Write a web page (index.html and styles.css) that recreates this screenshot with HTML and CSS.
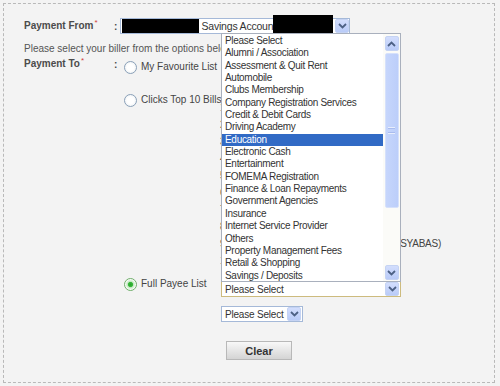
FILE: index.html
```html
<!DOCTYPE html>
<html lang="en">
<head>
  <meta charset="UTF-8">
  <title>Bill Payment</title>
  <link rel="stylesheet" href="styles.css">
</head>
<body>

  <div class="panel">

    <!-- from account -->
    <div class="form-row from-row">
      <span class="label">Payment From<sup>*</sup></span>
      <span class="colon">:</span>
      <div class="select account">
        <span class="redact r1"></span>
        <span class="select-text">Savings Account</span>
        <span class="redact r2"></span>
        <span class="drop-btn"><svg width="9" height="6" viewBox="0 0 9 6"><polyline points="1,1 4.5,4.5 8,1" /></svg></span>
      </div>
    </div>

    <p class="hint">Please select your biller from the options below</p>

    <!-- biller -->
    <div class="form-row to-row">
      <span class="label">Payment To<sup>*</sup></span>
      <span class="colon">:</span>
      <div class="options">

        <div class="option fav">
          <label class="choice"><span class="radio"></span>My Favourite List</label>
        </div>

        <div class="option top">
          <label class="choice"><span class="radio"></span>Clicks Top 10 Bills</label>
          <ol class="top-list">
            <li>1. Tenaga Nasional Berhad</li>
            <li>2. Telekom Malaysia</li>
            <li>3. Astro</li>
            <li>4. Maxis</li>
            <li>5. Celcom</li>
            <li>6. DiGi</li>
            <li>7. Indah Water Konsortium</li>
            <li>8. Dewan Bandaraya</li>
            <li>9. Syarikat Bekalan Air Selangor Sdn Bhd (SYABAS)</li>
            <li>10. Prudential</li>
          </ol>
        </div>

        <div class="option full">
          <label class="choice"><span class="radio checked"></span>Full Payee List</label>
          <div class="full-fields">
            <div class="select category focused">
              <span class="select-text">Please Select</span>
              <span class="drop-btn"><svg width="9" height="6" viewBox="0 0 9 6"><polyline points="1,1 4.5,4.5 8,1" /></svg></span>
            </div>
            <div class="select payee">
              <span class="select-text">Please Select</span>
              <span class="drop-btn"><svg width="9" height="6" viewBox="0 0 9 6"><polyline points="1,1 4.5,4.5 8,1" /></svg></span>
            </div>
            <button class="clear-btn">Clear</button>
          </div>
        </div>

      </div>
    </div>

    <!-- open dropdown -->
    <div class="dropdown">
      <ul class="dropdown-items">
        <li>Please Select</li>
        <li>Alumni / Association</li>
        <li>Assessment &amp; Quit Rent</li>
        <li>Automobile</li>
        <li>Clubs Membership</li>
        <li>Company Registration Services</li>
        <li>Credit &amp; Debit Cards</li>
        <li>Driving Academy</li>
        <li class="selected">Education</li>
        <li>Electronic Cash</li>
        <li>Entertainment</li>
        <li>FOMEMA Registration</li>
        <li>Finance &amp; Loan Repayments</li>
        <li>Government Agencies</li>
        <li>Insurance</li>
        <li>Internet Service Provider</li>
        <li>Others</li>
        <li>Property Management Fees</li>
        <li>Retail &amp; Shopping</li>
        <li>Savings / Deposits</li>
      </ul>
      <div class="scrollbar">
        <span class="scroll-btn"><svg width="9" height="6" viewBox="0 0 9 6"><polyline points="1,5 4.5,1.5 8,5" /></svg></span>
        <span class="thumb"><span class="grip"></span></span>
        <span class="track"></span>
        <span class="scroll-btn"><svg width="9" height="6" viewBox="0 0 9 6"><polyline points="1,1 4.5,4.5 8,1" /></svg></span>
      </div>
    </div>

  </div>

</body>
</html>
```

FILE: styles.css
```css
body {
  margin: 0;
  padding: 3px;
  background: #f3f3f3;
  font-family: "Liberation Sans", Arial, sans-serif;
  font-size: 10px;
  color: #4a4a4a;
}

/* 枠 */
.panel {
  position: relative;
  box-sizing: border-box;
  width: 492px;
  height: 380px;
  border: 1px dashed #b9b9b9;
  padding: 14px 0 0 20px;
}

.form-row {
  display: flex;
  align-items: flex-start;
}

.label {
  width: 90px;
  font-weight: bold;
  color: #4b4b4b;
  line-height: 16px;
}

.label sup {
  color: #d23c3c;
  font-size: 8px;
  font-weight: normal;
  vertical-align: 4px;
  line-height: 0;
  margin-left: 1px;
}

.colon {
  width: 6px;
  font-weight: bold;
  line-height: 18px;
}

/* セレクト */
.select {
  display: flex;
  align-items: center;
  box-sizing: border-box;
  height: 16px;
  background: #fff;
  border: 1px solid #a5b9d8;
  color: #333;
  letter-spacing: -0.2px;
}

.select-text {
  flex: 1;
  padding-left: 3px;
  white-space: nowrap;
}

.drop-btn, .scroll-btn {
  display: flex;
  align-items: center;
  justify-content: center;
  box-sizing: border-box;
  width: 14px;
  height: 14px;
  background: linear-gradient(#d3defd, #b9cbf8);
  border: 1px solid #c5d3f3;
  border-radius: 2px;
}

.drop-btn svg polyline, .scroll-btn svg polyline {
  fill: none;
  stroke: #4d6185;
  stroke-width: 1.8;
}

.account {
  position: relative;
  width: 230px;
}

.account .select-text {
  flex: none;
  width: 72px;
  padding-left: 2px;
  overflow: hidden;
  font-size: 10.5px;
}

.redact {
  background: #000;
}

.r1 {
  width: 78px;
  height: 14px;
  margin-left: 1px;
}

.r2 {
  width: 60px;
  height: 22px;
  margin-right: 2px;
  position: relative;
  z-index: 1;
}

.hint {
  margin: 6px 0 1px;
  line-height: 13px;
  color: #555;
}

/* 選択肢 */
.options {
  padding-top: 3px;
}

.option {
  display: flex;
  align-items: flex-start;
}

.choice {
  display: flex;
  align-items: center;
  gap: 4px;
  width: 101px;
  padding-left: 4px;
  box-sizing: border-box;
  line-height: 13px;
  color: #444;
  white-space: nowrap;
}

.radio {
  flex: none;
  box-sizing: border-box;
  width: 13px;
  height: 13px;
  margin-top: 2px;
  border: 1px solid #8aa0b8;
  border-radius: 50%;
  background: radial-gradient(#ffffff 40%, #e8ecef);
}

.radio.checked {
  border-color: #6fae6a;
  background: radial-gradient(#27a32a 0, #38b83a 28%, #bfe6bd 38%, #fff 70%);
}

.fav {
  height: 33px;
}

.top {
  height: 184px;
}

.top-list {
  list-style: none;
  margin: 7px 0 0 -1px;
  padding: 0;
  line-height: 17px;
  color: #444;
  white-space: nowrap;
  letter-spacing: -0.25px;
}

.full-fields {
  padding-top: 5px;
}

.category {
  width: 180px;
  border-color: #cdbb7e;
}

.payee {
  width: 82px;
  margin-top: 9px;
}

.category .drop-btn, .payee .drop-btn {
  margin-right: 1px;
}

/* クリアボタン */
.clear-btn {
  display: block;
  width: 66px;
  height: 19px;
  margin: 19px 0 0 5px;
  padding: 0;
  border: 1px solid #b8b8b8;
  background: linear-gradient(#f8f8f8, #d4d4d4);
  font-family: "Liberation Sans", Arial, sans-serif;
  font-size: 11px;
  font-weight: bold;
  color: #333;
}

/* 開いたドロップダウン */
.dropdown {
  position: absolute;
  left: 217px;
  top: 29px;
  box-sizing: border-box;
  width: 180px;
  height: 249px;
  display: flex;
  background: #fff;
  border: 1px solid #a9b0bd;
  z-index: 5;
}

.dropdown-items {
  list-style: none;
  flex: 1;
  margin: 0;
  padding: 1px 0 0;
  color: #333;
  letter-spacing: -0.3px;
}

.dropdown-items li {
  height: 12.35px;
  line-height: 12.35px;
  padding-left: 3px;
  white-space: nowrap;
}

.dropdown-items li.selected {
  background: #316ac5;
  color: #fff;
}

.scrollbar {
  display: flex;
  flex-direction: column;
  align-items: center;
  width: 17px;
  padding: 2px 0 1px;
  box-sizing: border-box;
  background: #fbfbf8;
}

.scroll-btn {
  height: 15px;
}

.thumb {
  display: flex;
  align-items: center;
  justify-content: center;
  box-sizing: border-box;
  width: 14px;
  height: 155px;
  margin-top: 2px;
  background: linear-gradient(90deg, #c6d6fc, #bccefa);
  border: 1px solid #d6e1fb;
  border-radius: 2px;
}

.grip {
  width: 7px;
  height: 5px;
  border-top: 1px solid #e8eefc;
  border-bottom: 1px solid #e8eefc;
  box-shadow: inset 0 1px 0 #a9bcef, inset 0 -1px 0 #a9bcef;
}

.track {
  flex: 1;
}
```
